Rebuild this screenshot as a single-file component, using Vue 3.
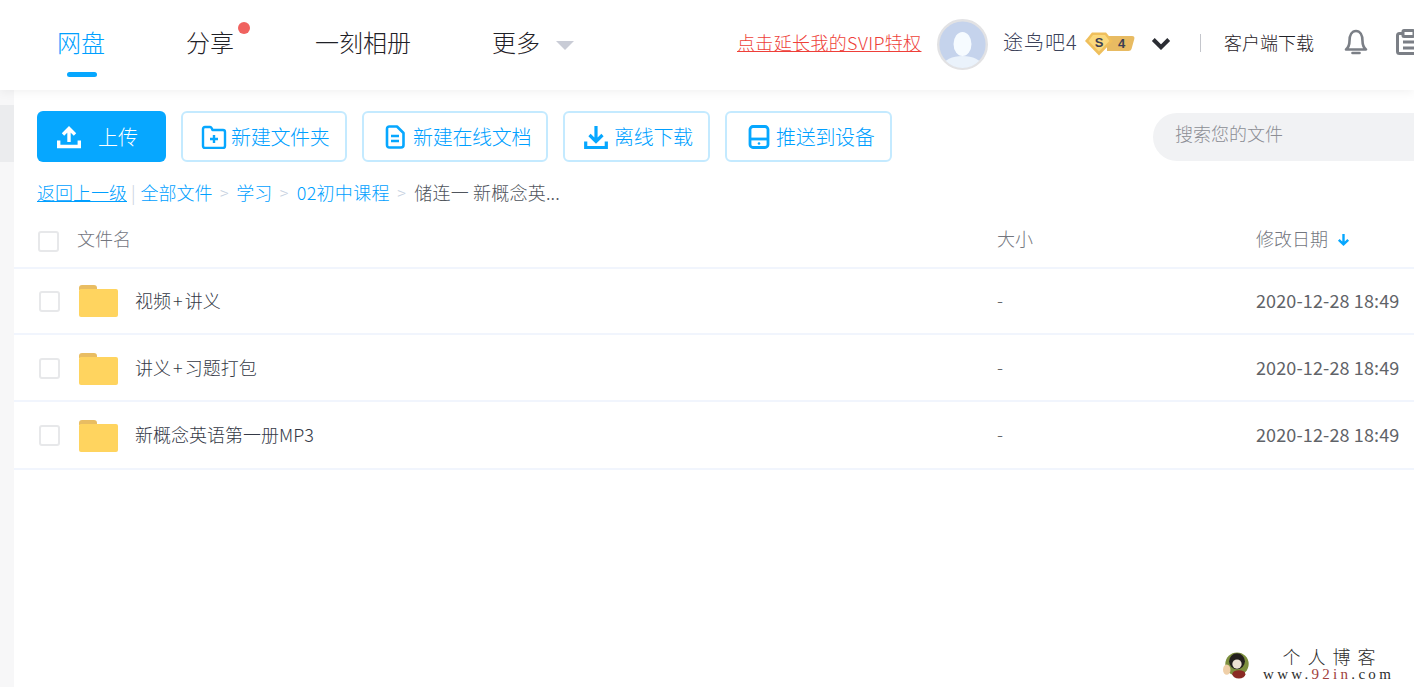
<script setup>
const navs = [
  { label: '网盘', active: true },
  { label: '分享', dot: true },
  { label: '一刻相册' },
  { label: '更多', arrow: true },
]
const files = [
  { pre: '视频', post: '讲义', cls: 'r1' },
  { pre: '讲义', post: '习题打包', cls: 'r2' },
  { pre: '新概念英语第一册MP3', cls: 'r3' },
]
</script>

<template>
  <div class="page">
    <header class="top">
      <nav class="nav">
        <a v-for="n in navs" :key="n.label" class="nav-item" :class="{ active: n.active }">
          {{ n.label }}
          <i v-if="n.dot" class="dot"></i>
          <i v-if="n.arrow" class="caret"></i>
        </a>
      </nav>
      <div class="user">
        <a class="svip">点击延长我的SVIP特权</a>
        <svg class="avatar" width="51" height="51" viewBox="0 0 51 51">
          <defs><clipPath id="av"><circle cx="25.5" cy="25.5" r="23.5" /></clipPath></defs>
          <circle cx="25.5" cy="25.5" r="24.3" fill="#c5d3ec" stroke="#e2e2e4" stroke-width="2.4" />
          <g clip-path="url(#av)">
            <ellipse cx="25.5" cy="46" rx="19" ry="9" fill="#eaf2fb" />
            <ellipse cx="25.5" cy="25" rx="9" ry="12" fill="#f6fbff" />
          </g>
        </svg>
        <span class="uname">途鸟吧4</span>
        <svg class="badge" width="50" height="24" viewBox="0 0 50 24">
          <path d="M22 4h25q3 0 2.300 3l-2.800 10q-.5 2-3 2H22z" fill="#e8bb62" />
          <path d="M7 0.500h14l7 8.500-14 14.500L0 9z" fill="#efbf5c" />
          <path d="M8 3h12l4.500 6L14 19.500 3.500 9z" fill="#fbd97d" />
          <text x="14" y="15" class="badge-t">S</text>
          <text x="36.500" y="16" class="badge-t">4</text>
        </svg>
        <svg class="chev" width="20" height="13" viewBox="0 0 20 13">
          <path d="M2.300 2.500L10 10.200l7.700-7.700" fill="none" stroke="#2b2d33" stroke-width="4" />
        </svg>
        <i class="sep"></i>
        <a class="client">客户端下载</a>
        <svg class="bell" width="24" height="26" viewBox="0 0 24 26" fill="none" stroke="#7b7f86" stroke-width="2.600">
          <path d="M2 20.500c2.500-2 3.500-4 3.500-8.500C5.500 6 8 2 12 2s6.500 4 6.500 10c0 4.500 1 6.500 3.500 8.500z" stroke-linejoin="round" />
          <path d="M8.500 24h7" stroke-linecap="round" />
        </svg>
        <svg class="clip" width="24" height="26" viewBox="0 0 24 26" fill="none" stroke="#7b7f86" stroke-width="3">
          <path d="M6 4.500H3.500q-2 0-2 2v16q0 2 2 2h17q2 0 2-2v-16q0-2-2-2H18" />
          <rect x="7" y="1.500" width="11" height="6" rx="1" fill="#fff" />
          <path d="M7 13h11M7 19h11" />
        </svg>
      </div>
    </header>

    <div class="body">
      <aside class="side"><div class="side-block"></div></aside>
      <main class="main">
        <div class="toolbar">
          <button class="btn primary">
            <svg width="24" height="24" viewBox="0 0 24 24" fill="none" stroke="#fff" stroke-width="3.400">
              <path d="M12 17V4M6 9.500L12 3.500l6 6" />
              <path d="M1.700 15.500v6h20.600v-6" />
            </svg>
            <span class="up-label">上传</span>
          </button>
          <button class="btn ghost b1">
            <svg width="26" height="24" viewBox="0 0 26 24" fill="none" stroke="#06a7ff" stroke-width="2.400">
              <path d="M2 21V4q0-2 2-2h5q1.500 0 2.500 3H22q2 0 2 2v14q0 2-2 2H4q-2 0-2-2z" stroke-linejoin="round" />
              <path d="M9 14h8M13 10v8" />
            </svg>
            <span>新建文件夹</span>
          </button>
          <button class="btn ghost b2">
            <svg width="20" height="24" viewBox="0 0 20 24" fill="none" stroke="#06a7ff" stroke-width="2.600">
              <path d="M2 4q0-2.500 2.500-2.500H12L18.500 8v12q0 2.500-2.500 2.500H4.500Q2 22.500 2 20z" stroke-linejoin="round" />
              <path d="M6 11h8M6 16h8" />
            </svg>
            <span>新建在线文档</span>
          </button>
          <button class="btn ghost b3">
            <svg width="24" height="24" viewBox="0 0 24 24" fill="none" stroke="#06a7ff" stroke-width="3.200">
              <path d="M12 1v15M5.500 10l6.500 6.500 6.500-6.500" />
              <path d="M1.700 16.500v6h20.600v-6" />
            </svg>
            <span>离线下载</span>
          </button>
          <button class="btn ghost b4">
            <svg width="22" height="24" viewBox="0 0 22 24" fill="none" stroke="#06a7ff" stroke-width="2.800">
              <rect x="2" y="1.500" width="18" height="21" rx="3" />
              <path d="M2 14h18" />
              <circle cx="11" cy="18.500" r="1.300" fill="#06a7ff" stroke="none" />
            </svg>
            <span>推送到设备</span>
          </button>
          <div class="search">搜索您的文件</div>
        </div>

        <div class="crumbs">
          <a class="link under">返回上一级</a>
          <i class="bar">|</i>
          <a class="link">全部文件</a>
          <i class="gt">&gt;</i>
          <a class="link">学习</a>
          <i class="gt">&gt;</i>
          <a class="link wide">02初中课程</a>
          <i class="gt">&gt;</i>
          <span class="cur">储连一 新概念英...</span>
        </div>

        <div class="row head">
          <i class="check head-check"></i>
          <span class="name-h">文件名</span>
          <span class="size-h">大小</span>
          <span class="date-h">修改日期
            <svg width="13" height="13" viewBox="0 0 13 13" fill="none" stroke="#06a7ff" stroke-width="2.400">
              <path d="M6.500 1v10M1.800 6.800l4.700 4.500 4.700-4.500" />
            </svg>
          </span>
        </div>
        <div v-for="f in files" :key="f.pre" class="row item" :class="f.cls">
          <i class="check"></i>
          <svg class="folder" width="39" height="32" viewBox="0 0 39 32">
            <path d="M0 3q0-3 3-3h12q3 0 3 3v2H0z" fill="#e9bd62" />
            <rect y="4" width="39" height="28" rx="2" fill="#ffd45f" />
          </svg>
          <span class="fname">{{ f.pre }}<span v-if="f.post" class="plus">+</span>{{ f.post }}</span>
          <span class="size">-</span>
          <span class="date">2020-12-28 18:49</span>
        </div>
      </main>
    </div>

    <div class="mark">
      <svg width="28" height="28" viewBox="0 0 30 30">
        <circle cx="15" cy="14" r="12.500" fill="#7d8f3e" />
        <ellipse cx="15" cy="11" rx="8.500" ry="8.500" fill="#24201e" />
        <ellipse cx="15" cy="14" rx="5" ry="5" fill="#eee2d4" />
        <ellipse cx="17" cy="25" rx="7" ry="4.500" fill="#8a2a24" />
        <ellipse cx="4" cy="20" rx="4" ry="5.500" fill="#efcfa8" />
      </svg>
      <div class="mark-text">
        <div class="mark-cn">个人博客</div>
        <div class="mark-en">www.<b>92in</b>.com</div>
      </div>
    </div>
  </div>
</template>

<style>
html, body { margin: 0; background: #fff; }
</style>

<style scoped>
.page {
  position: relative;
  width: 1414px;
  height: 687px;
  overflow: hidden;
  background: #fff;
  font-family: "Noto Sans CJK SC", "Noto Sans", sans-serif;
  font-weight: 300;
  display: flex;
  flex-direction: column;
}
i { font-style: normal; }
.top {
  height: 90px;
  flex: none;
  display: flex;
  align-items: center;
  box-shadow: 0 2px 10px rgba(0, 0, 0, .06);
  position: relative;
  z-index: 2;
  background: #fff;
}
.nav {
  display: flex;
  gap: 81px;
  padding-left: 57px;
  width: 737px;
  flex: none;
  box-sizing: border-box;
}
.nav-item {
  position: relative;
  font-size: 24px;
  line-height: 30px;
  color: #1f2127;
  white-space: nowrap;
  margin-top: -6px;
}
.nav-item.active { color: #009fff; }
.nav-item.active::after {
  content: "";
  position: absolute;
  left: 10px;
  top: 45px;
  width: 30px;
  height: 5px;
  border-radius: 3px;
  background: #06a7ff;
}
.dot {
  position: absolute;
  left: 52px;
  top: -5px;
  width: 12px;
  height: 12px;
  border-radius: 50%;
  background: #f0625f;
}
.caret {
  position: absolute;
  left: 64px;
  top: 14px;
  border-left: 9px solid transparent;
  border-right: 9px solid transparent;
  border-top: 9px solid #c9ccd6;
}
.user {
  display: flex;
  align-items: center;
  flex: none;
  white-space: nowrap;
}
.svip {
  font-size: 18px;
  margin-top: -6px;
  color: #ee3f39;
  text-decoration: underline;
  margin-right: 15px;
  width: 185px;
  letter-spacing: .35px;
}
.avatar { flex: none; margin-top: -2px; }
.uname {
  margin-left: 15px;
  font-size: 20px;
  color: #3c425a;
  width: 74px;
  letter-spacing: 1px;
  margin-top: -8px;
}
.badge { margin-left: 8px; flex: none; margin-top: -2px; }
.badge-t { font: 700 13px "Liberation Sans", sans-serif; fill: #3c3f52; text-anchor: middle; }
.chev { margin-left: 16px; flex: none; margin-top: -4px; }
.sep { width: 1px; height: 18px; background: #c4c6cc; margin: -4px 0 0 29px; }
.client { font-size: 18px; color: #1f2127; margin-left: 23px; width: 90px; margin-top: -6px; }
.bell { margin-left: 30px; flex: none; margin-top: -6px; }
.clip { margin-left: 28px; flex: none; margin-top: -6px; }

.body { flex: 1; display: flex; min-height: 0; }
.side { width: 14px; flex: none; background: #f7f7f8; padding-top: 15px; }
.side-block { height: 57px; background: #ebecee; }
.main { flex: 1; min-width: 0; }
.toolbar {
  display: flex;
  align-items: center;
  gap: 15px;
  padding: 21px 0 0 23px;
}
.btn {
  height: 51px;
  box-sizing: border-box;
  border-radius: 6px;
  font: inherit;
  font-size: 20px;
  display: flex;
  align-items: center;
  justify-content: flex-start;
  padding: 0;
  flex: none;
}
.primary {
  width: 129px;
  background: #06a7ff;
  color: #fff;
  border: 0;
  gap: 17px;
  padding-left: 20px;
}
.ghost {
  background: #fff;
  color: #009fff;
  border: 2px solid #c4eaff;
  letter-spacing: -.3px;
}
.b1 { width: 166px; padding-left: 18px; gap: 4px; }
.b2 { width: 186px; padding-left: 21px; gap: 8px; }
.b3 { width: 147px; padding-left: 19px; gap: 6px; }
.b4 { width: 167px; padding-left: 21px; gap: 6px; }
.search {
  width: 320px;
  height: 48px;
  margin-left: 246px;
  flex: none;
  background: #f1f2f4;
  border-radius: 24px 0 0 24px;
  color: #8c8e95;
  font-size: 18px;
  line-height: 40px;
  padding-left: 22px;
  box-sizing: border-box;
}
.crumbs {
  display: flex;
  align-items: center;
  padding-left: 23px;
  margin-top: 17px;
  height: 26px;
  font-size: 18px;
  white-space: nowrap;
}
.link { color: #009fff; }
.under { text-decoration: underline; }
.wide { letter-spacing: .3px; margin-left: 1px; }
.bar { color: #c8d0de; margin: 0 5px 0 4px; }
.gt { color: #c4cfe0; font-size: 16px; margin: 0 7.500px; }
.cur { color: #50555d; letter-spacing: .2px; margin-left: 1px; }

.row {
  display: flex;
  align-items: center;
  box-sizing: border-box;
  border-bottom: 2px solid #f1f5fd;
  position: relative;
}
.head {
  height: 64px;
  color: #73767e;
  font-size: 18px;
  padding-top: 10px;
}
.item { color: #343946; font-size: 18px; }
.r1 { height: 66px; }
.r2 { height: 67px; padding-top: 2px; }
.r3 { height: 68px; padding-top: 1px; }
.check {
  flex: none;
  width: 21px;
  height: 21px;
  box-sizing: border-box;
  border: 2px solid #e7e8ea;
  border-radius: 3px;
  margin-left: 25px;
}
.head-check { margin-left: 24px; }
.name-h { margin: -6px 0 0 18px; width: 920px; flex: none; }
.size-h { width: 259px; flex: none; margin-top: -6px; }
.date-h { display: flex; align-items: center; gap: 9px; white-space: nowrap; margin-top: -6px; }
.date-h svg { margin-top: 2px; }
.folder { flex: none; margin-left: 19px; }
.fname { margin: -3px 0 0 17px; width: 862px; flex: none; white-space: nowrap; }
.plus { margin: 0 2px; }
.size { width: 259px; flex: none; color: #5f6166; margin-top: -5px; }
.date { white-space: nowrap; color: #5f6368; font-weight: 400; margin-top: -3px; letter-spacing: .13px; }

.mark {
  position: absolute;
  left: 1223px;
  top: 647px;
  display: flex;
  align-items: center;
  gap: 12px;
}
.mark-text {
  font-family: "Liberation Serif", serif;
  color: #2d2d2d;
  text-align: center;
  white-space: nowrap;
}
.mark-cn {
  font-size: 18px;
  line-height: 19px;
  letter-spacing: 7px;
  font-family: "Noto Sans CJK SC", serif;
  font-weight: 300;
  padding-left: 8px;
}
.mark-en { font-size: 15px; line-height: 16px; letter-spacing: 3.300px; }
.mark-en b { font-weight: 400; color: #a0403c; }
</style>
